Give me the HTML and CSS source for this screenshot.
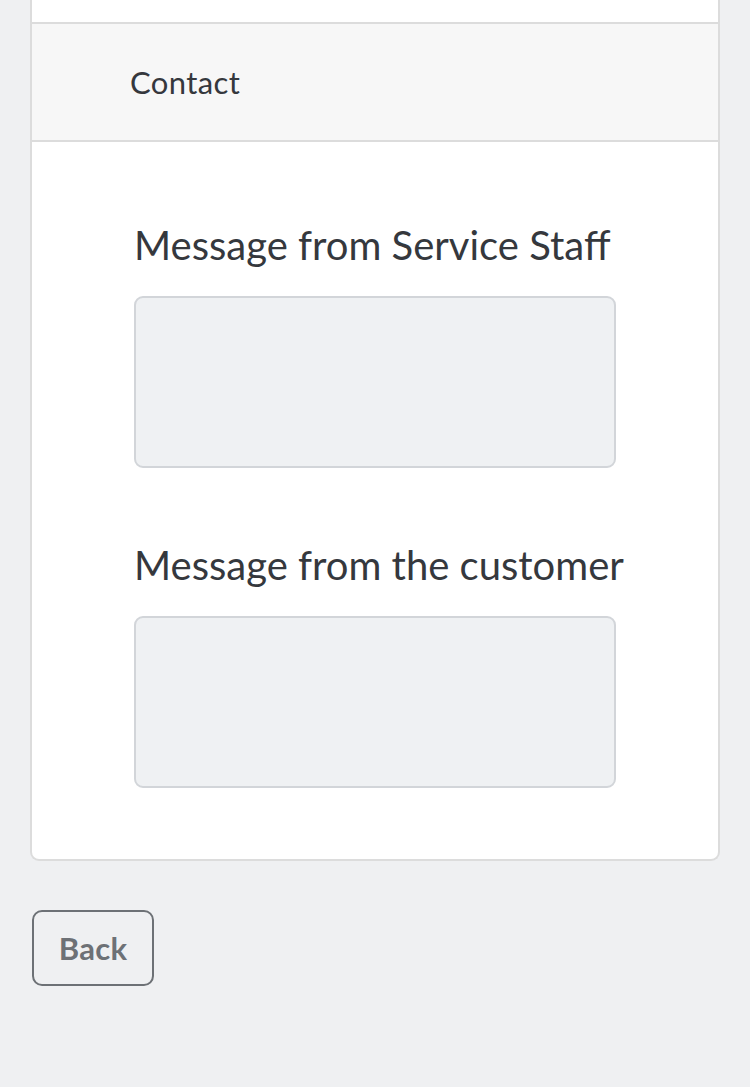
FILE: index.html
```html
<!DOCTYPE html>
<html lang="en">
<head>
<meta charset="utf-8">
<title>Contact</title>
<link rel="stylesheet" href="styles.css">
</head>
<body>
<main class="page">
  <section class="card">
    <div class="card-top"></div>
    <header class="card-header">Contact</header>
    <div class="card-body">
      <div class="field">
        <label class="field-label">Message from Service Staff</label>
        <div class="field-box"></div>
      </div>
      <div class="field">
        <label class="field-label">Message from the customer</label>
        <div class="field-box"></div>
      </div>
    </div>
  </section>
  <div class="actions">
    <button class="btn-back" type="button">Back</button>
  </div>
</main>
</body>
</html>
```

FILE: styles.css
```css
html, body {
  margin: 0;
  padding: 0;
}
body {
  background: #eff0f2;
  font-family: Lato, "Noto Sans", sans-serif;
  color: #35383d;
  height: 1087px;
  overflow: hidden;
}
.page {
  padding: 0 30px;
}
.card {
  background: #ffffff;
  border: 2px solid #dcdcdc;
  border-top: none;
  border-radius: 0 0 9px 9px;
}
.card-top {
  height: 22px;
}
.card-header {
  background: #f7f7f7;
  border-top: 2px solid #dcdcdc;
  border-bottom: 2px solid #dcdcdc;
  height: 116px;
  display: flex;
  align-items: center;
  padding-left: 98px;
  font-size: 31px;
  letter-spacing: 0.4px;
  color: #35383d;
}
.card-body {
  padding: 79px 0 71px 102px;
  display: flex;
  flex-direction: column;
  gap: 73px;
}
.field {
  display: flex;
  flex-direction: column;
  gap: 27px;
}
.field-label {
  font-size: 40px;
  line-height: 48px;
  color: #35383d;
}
.field-box {
  width: 478px;
  height: 168px;
  background: #eff1f3;
  border: 2px solid #d2d5d9;
  border-radius: 9px;
}
.actions {
  padding-top: 49px;
}
.btn-back {
  margin-left: 2px;
  width: 122px;
  height: 76px;
  border: 2px solid #6d7176;
  border-radius: 10px;
  background: transparent;
  font-family: Lato, "Noto Sans", sans-serif;
  font-weight: 700;
  font-size: 31px;
  letter-spacing: 0.3px;
  color: #6d7176;
  padding: 0;
}
```
